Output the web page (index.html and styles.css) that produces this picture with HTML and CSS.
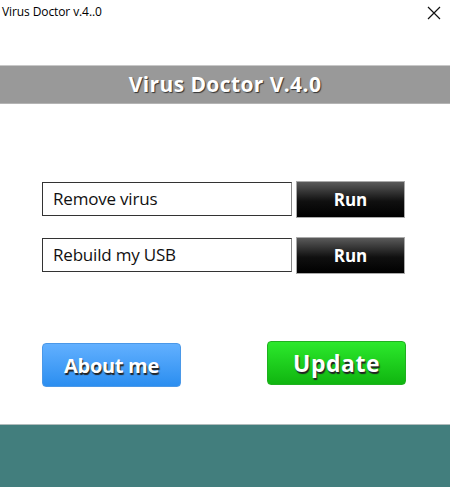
FILE: index.html
```html
<!DOCTYPE html>
<html>
<head>
    <title>Virus Doctor v.4..0</title>
    <link rel="stylesheet" href="styles.css">
</head>
<body>
    <div class="window">
        <!-- Title bar -->
        <div class="titlebar">
            <span class="title">Virus Doctor v.4..0</span>
            <svg class="close" width="14" height="14" viewBox="0 0 14 14">
                <path d="M1 1 L13 13 M13 1 L1 13" stroke="#111" stroke-width="1.2"/>
            </svg>
        </div>

        <div class="banner">Virus Doctor V.4.0</div>

        <div class="tasks">
            <div class="task">
                <div class="field">Remove virus</div>
                <button class="run">Run</button>
            </div>
            <div class="task">
                <div class="field">Rebuild my USB</div>
                <button class="run">Run</button>
            </div>
        </div>

        <div class="actions">
            <button class="big about">About me</button>
            <button class="big update">Update</button>
        </div>

        <div class="footer"></div>
    </div>
</body>
</html>
```

FILE: styles.css
```css
body {
    margin: 0;
    background: #fff;
    font-family: "Open Sans", "Noto Sans", sans-serif;
}
.window {
    width: 450px;
    height: 487px;
    display: flex;
    flex-direction: column;
    overflow: hidden;
}
.titlebar {
    height: 30px;
    display: flex;
    justify-content: space-between;
    align-items: flex-start;
    padding: 0 8px 0 2px;
}
.title {
    font-size: 12px;
    color: #000;
    margin-top: 3px;
    letter-spacing: -0.1px;
}
.close {
    margin-top: 6px;
    margin-right: 1px;
}
.banner {
    margin-top: 35px;
    height: 37px;
    background: #999;
    border-top: 1px solid #c8c8c8;
    border-bottom: 1px solid #b4b4b4;
    color: #fff;
    font-weight: bold;
    font-size: 21px;
    text-align: center;
    line-height: 37px;
    text-shadow: 1px 1px 1px #333;
    letter-spacing: 0.4px;
}
.tasks {
    margin-top: 78px;
    display: flex;
    flex-direction: column;
    gap: 22px;
    padding-left: 42px;
}
.task {
    display: flex;
    align-items: flex-start;
    gap: 4px;
    height: 34px;
}
.field {
    width: 238px;
    height: 32px;
    border: 1px solid #333;
    border-right-color: #888;
    font-size: 17px;
    line-height: 32px;
    padding-left: 10px;
    color: #111;
    letter-spacing: -0.2px;
}
.run {
    width: 109px;
    height: 37px;
    border: 1px solid #aaa;
    background: linear-gradient(#5a5a5a, #101010 55%, #000);
    color: #fff;
    font-family: "Open Sans", sans-serif;
    font-weight: bold;
    font-size: 17px;
    padding: 0;
    margin-top: -1px;
}
.actions {
    margin-top: 69px;
    display: flex;
    justify-content: space-between;
    align-items: flex-start;
    padding: 0 44px 0 42px;
}
.big {
    height: 44px;
    border-radius: 4px;
    color: #fff;
    font-family: "Open Sans", sans-serif;
    font-weight: bold;
    text-shadow: 1px 2px 1px #222;
    padding: 0;
}
.about {
    width: 139px;
    margin-top: 2px;
    border: 1px solid #4a98e8;
    background: linear-gradient(#62b0ff, #2b8ef0);
    font-size: 20px;
    letter-spacing: -0.3px;
}
.update {
    width: 139px;
    border: 1px solid #20b020;
    background: linear-gradient(#2ce92c, #10b510);
    font-size: 23px;
    letter-spacing: 0.5px;
}
.footer {
    margin-top: auto;
    height: 62px;
    background: #427e7d;
    border-top: 1px solid #b0bcbc;
}
```
